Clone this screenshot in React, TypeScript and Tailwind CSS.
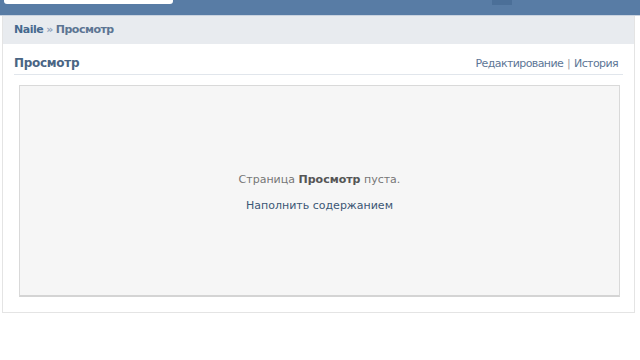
export default function App() {
  const font = { fontFamily: '"DejaVu Sans", Tahoma, sans-serif' };
  return (
    <div className="w-[640px] h-[360px] bg-white overflow-hidden" style={font}>
      {/* top bar */}
      <div className="h-[15px] bg-[#587ca5] flex items-start">
        <div className="ml-[4px] w-[169px] h-[4px] bg-white rounded-b-[3px]" />
        <div className="ml-[319px] w-[20px] h-[5px] bg-[#4b6f98]" />
      </div>
      <div className="h-[1px] bg-[#c9d3e0]" />
      {/* main panel */}
      <div className="ml-[2px] w-[633px] border-x border-b border-[#e4e4e4]">
        <div className="h-[28px] bg-[#e8ebef] flex items-center pl-[11px] text-[11px] font-bold tracking-[-0.5px]">
          <span className="text-[#45688e]">Naile</span>
          <span className="text-[#8fa4bd] mx-[3px]">»</span>
          <span className="text-[#5c7593]">Просмотр</span>
        </div>
        <div className="px-[11px] pt-[11px] pb-[15px]">
          <div className="flex items-end justify-between pb-[3px] border-b border-[#e1e6ec]">
            <span className="text-[12px] font-bold text-[#4a6584] tracking-[-0.3px] leading-[16px]">Просмотр</span>
            <span className="text-[11px] text-[#5d7696] tracking-[-0.6px] leading-[14px] mr-[5px]">
              Редактирование <span className="text-[#a0a0a0] mx-[1px]">|</span> История
            </span>
          </div>
          <div className="mt-[10px] ml-[5px] mr-[3px] h-[212px] pt-[5px] bg-[#f6f6f6] border border-[#d9d9d9] border-b-2 border-b-[#d4d4d4] flex flex-col items-center justify-center text-[11px]">
            <div className="text-[#777777]">
              Страница <b className="text-[#555555]">Просмотр</b> пуста.
            </div>
            <div className="text-[#3b5775] mt-[9px]">Наполнить содержанием</div>
          </div>
        </div>
      </div>
    </div>
  );
}
